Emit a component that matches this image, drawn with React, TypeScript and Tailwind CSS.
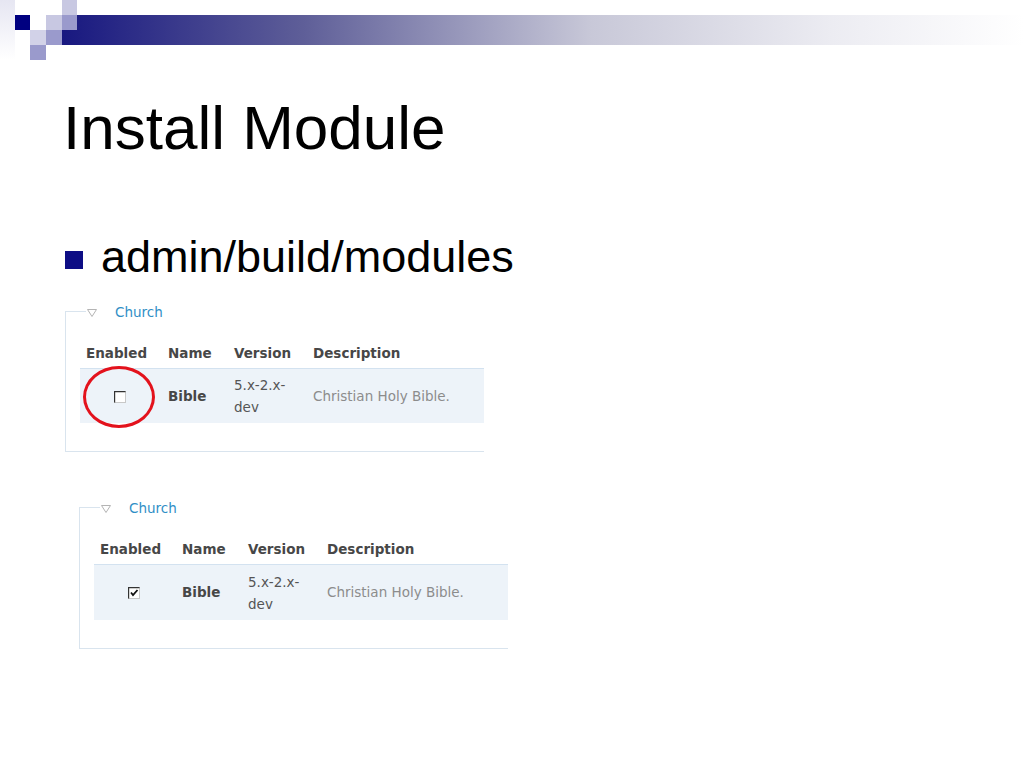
import React from 'react';

/**
 * スライド上部のロゴ（四角形とグラデーションの帯）
 */
function HeaderLogo(): JSX.Element {
  return (
    <svg width="1024" height="60" viewBox="0 0 1024 60" className="block">
      <defs>
        <linearGradient id="bar" x1="0" y1="0" x2="1" y2="0">
          <stop offset="0" stopColor="#181880" />
          <stop offset="0.25" stopColor="#5e5e98" />
          <stop offset="0.55" stopColor="#c8c8d8" />
          <stop offset="0.8" stopColor="#ececf2" />
          <stop offset="1" stopColor="#ffffff" />
        </linearGradient>
        <linearGradient id="side" x1="0" y1="0" x2="0" y2="1">
          <stop offset="0" stopColor="#e6e6f2" />
          <stop offset="1" stopColor="#ffffff" />
        </linearGradient>
      </defs>
      <rect x="0" y="0" width="15" height="60" fill="url(#side)" />
      <rect x="62" y="15" width="962" height="30" fill="url(#bar)" />
      <rect x="62" y="0" width="15" height="15" fill="#c8c8e2" />
      <rect x="15" y="15" width="15" height="15" fill="#000080" />
      <rect x="46" y="15" width="16" height="15" fill="#c8c8e2" />
      <rect x="62" y="15" width="15" height="15" fill="#9a9acc" />
      <rect x="30" y="30" width="16" height="15" fill="#d2d2e8" />
      <rect x="46" y="30" width="16" height="15" fill="#9a9acc" />
      <rect x="30" y="45" width="16" height="15" fill="#9a9acc" />
    </svg>
  );
}

function CheckBox({ checked }: { checked: boolean }): JSX.Element {
  return (
    <svg width="12" height="12" viewBox="0 0 12 12" className="block">
      <rect x="0.5" y="0.5" width="11" height="11" fill="#ffffff" stroke="#c8c8c8" />
      <path d="M0.5 11.5 V0.5 H11.5" fill="none" stroke="#333333" strokeWidth="1.4" />
      {checked && <path d="M3 5.5 L5 8 L9.5 3" fill="none" stroke="#111111" strokeWidth="1.8" />}
    </svg>
  );
}

/**
 * モジュール一覧の表（スクリーンショット風）
 */
function ModuleTable({ checked, circled, width, rowH }: { checked: boolean; circled: boolean; width: string; rowH: string }): JSX.Element {
  return (
    <div className={`flex flex-col border-l border-b border-[#d9e4ee] pb-[28px] ${width}`} style={{ fontFamily: '"DejaVu Sans", Verdana, sans-serif' }}>
      <div className="-mt-[8px] h-[16px] flex items-center">
        <div className="w-[20px] h-px bg-[#d9e4ee]" />
        <svg width="12" height="10" viewBox="0 0 12 10" className="mt-[3px]">
          <path d="M1.5 1.5 H10.5 L6 8.5 Z" fill="none" stroke="#b4b4b4" strokeWidth="1" />
        </svg>
        <span className="ml-[17px] mt-[3px] text-[13.5px] text-[#2f8fc6]">Church</span>
      </div>
      <div className="ml-[14px] mt-[19px] text-[13.5px]">
        <div className="grid grid-cols-[82px_66px_79px_1fr] h-[31px] items-center border-b border-[#d3e2f0] font-bold text-[#474747]">
          <div className="pl-[6px]">Enabled</div>
          <div className="pl-[6px]">Name</div>
          <div className="pl-[6px]">Version</div>
          <div className="pl-[6px]">Description</div>
        </div>
        <div className={`grid grid-cols-[82px_66px_79px_1fr] ${rowH} items-center bg-[#edf3f9]`}>
          <div className="relative flex justify-center pr-[2px] pt-[1px]">
            <CheckBox checked={checked} />
            {circled && (
              <div className="absolute left-[3px] -top-[24px] w-[72px] h-[62px] rounded-[50%] border-[3px] border-[#e3121c]" />
            )}
          </div>
          <div className="pl-[6px] font-bold text-[#474747]">Bible</div>
          <div className="pl-[6px] leading-[22px] text-[#555555]">
            5.x-2.x-
            <br />
            dev
          </div>
          <div className="pl-[6px] text-[#8c8c8c]">Christian Holy Bible.</div>
        </div>
      </div>
    </div>
  );
}

export default function App(): JSX.Element {
  return (
    <div className="w-[1024px] h-[768px] bg-white overflow-hidden" style={{ fontFamily: '"Liberation Sans", Arial, sans-serif' }}>
      <HeaderLogo />
      <h1 className="ml-[63px] mt-[37px] text-[62px] leading-[62px] text-black">Install Module</h1>
      <div className="ml-[65px] mt-[75px] flex items-center h-[45px]">
        <div className="w-[18px] h-[18px] bg-[#0d0d85] mt-[6px]" />
        <span className="ml-[18px] text-[45px] leading-[45px] text-black">admin/build/modules</span>
      </div>
      <div className="ml-[65px] mt-[32px]">
        <ModuleTable checked={false} circled={true} width="w-[419px]" rowH="h-[54px]" />
      </div>
      <div className="ml-[79px] mt-[55px]">
        <ModuleTable checked={true} circled={false} width="w-[429px]" rowH="h-[55px]" />
      </div>
    </div>
  );
}
